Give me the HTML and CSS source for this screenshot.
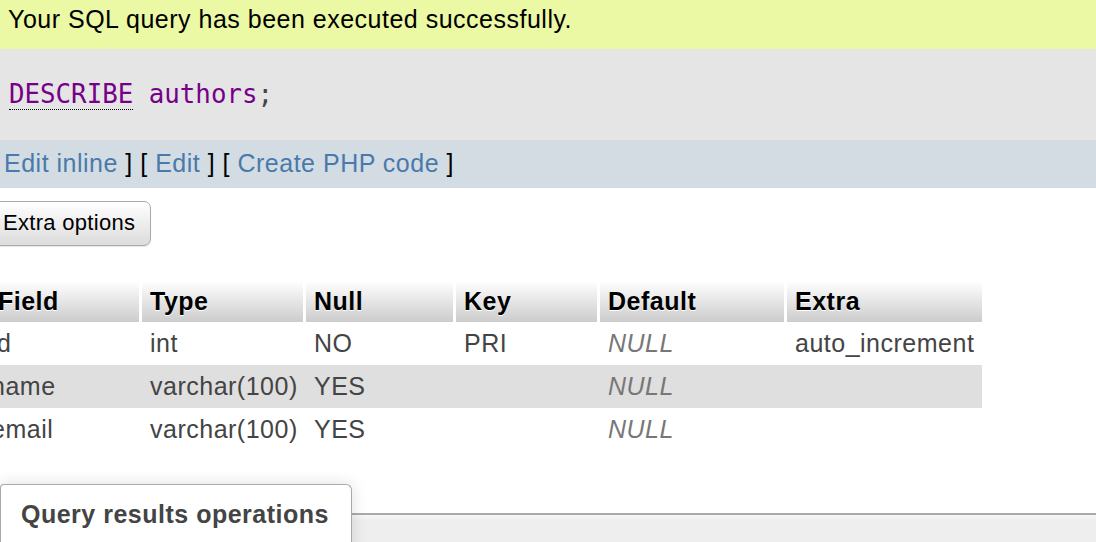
FILE: index.html
```html
<!DOCTYPE html>
<html>
<head>
<meta charset="utf-8">
<link rel="stylesheet" href="styles.css">
</head>
<body>
<div class="success">Your SQL query has been executed successfully.</div>
<div class="sql-box"><code class="sql"><span class="kw">DESCRIBE</span> <span class="var">authors</span><span class="punct">;</span></code></div>
<div class="tools"><a href="#">Edit inline</a> ] [ <a href="#">Edit</a> ] [ <a href="#">Create PHP code</a> ]</div>
<div class="btn-row"><button class="btn" type="button">Extra options</button></div>
<table class="grid">
  <colgroup>
    <col class="c-field"><col class="c-type"><col class="c-null"><col class="c-key"><col class="c-default"><col class="c-extra">
  </colgroup>
  <thead>
    <tr><th class="first">Field</th><th>Type</th><th>Null</th><th>Key</th><th>Default</th><th>Extra</th></tr>
  </thead>
  <tbody>
    <tr class="odd"><td>id</td><td>int</td><td>NO</td><td>PRI</td><td><i class="null">NULL</i></td><td>auto_increment</td></tr>
    <tr class="even"><td>name</td><td>varchar(100)</td><td>YES</td><td></td><td><i class="null">NULL</i></td><td></td></tr>
    <tr class="odd"><td>email</td><td>varchar(100)</td><td>YES</td><td></td><td><i class="null">NULL</i></td><td></td></tr>
  </tbody>
</table>
<div class="ops">
  <div class="tab">Query results operations</div>
  <div class="ops-body"></div>
</div>
</body>
</html>
```
FILE: styles.css
```css
html, body {
  margin: 0;
  padding: 0;
  background: #fff;
  overflow: hidden;
}
body {
  font-family: "Liberation Sans", Arial, sans-serif;
  font-size: 25px;
  line-height: 29px;
  letter-spacing: 0.5px;
  color: #000;
  width: 1096px;
  height: 542px;
}
.success {
  background: #ebf8a4;
  padding: 5px 8px 15px;
  height: 29px;
}
.sql-box {
  background: #e5e5e5;
  height: 91px;
  padding: 0 9px;
  box-sizing: border-box;
  padding-top: 30px;
}
.sql {
  font-family: "DejaVu Sans Mono", monospace;
  font-size: 25.8px;
  line-height: 30px;
  letter-spacing: 0;
  color: #770088;
}
.kw {
  border-bottom: 1px dotted #000;
}
.punct {
  color: #444;
}
.tools {
  background: #d3dce3;
  padding: 9px 4px 10px;
  height: 29px;
}
.tools a {
  color: #4a7aab;
  text-decoration: none;
}
.btn-row {
  padding-top: 13px;
}
.btn {
  font-family: "Liberation Sans", Arial, sans-serif;
  font-size: 22px;
  line-height: 27px;
  letter-spacing: 0.3px;
  color: #000;
  margin: 0 0 0 -11px;
  padding: 7px 15px 9px 13px;
  border: 1px solid #aaa;
  border-radius: 7px;
  background: linear-gradient(#ffffff, #dcdcdc);
  box-shadow: 0 1px 1px rgba(0,0,0,0.1);
}
.grid {
  margin: 35px 0 0 -20px;
  border-collapse: separate;
  border-spacing: 0;
  table-layout: fixed;
  width: 1002px;
}
.c-field { width: 159px; }
.c-type { width: 164px; }
.c-null { width: 150px; }
.c-key { width: 144px; }
.c-default { width: 187px; }
.c-extra { width: 198px; }
.grid th {
  text-align: left;
  font-weight: bold;
  padding: 6px 8px 6px 8px;
  border-left: 3px solid #fff;
  background: linear-gradient(#ffffff, #cccccc);
  text-shadow: 0 1px 0 #fff;
  white-space: nowrap;
}
.grid th.first {
  padding-left: 15px;
}
.grid td {
  padding: 7px 8px 7px 8px;
  border-left: 3px solid transparent;
  color: #444;
  white-space: nowrap;
  height: 29px;
}
.grid tr.even td {
  background: #dfdfdf;
}
.null {
  color: #777;
}
.ops {
  margin-top: 33px;
  display: flex;
  align-items: stretch;
  height: 80px;
}
.tab {
  width: 330px;
  padding: 15px 0 0 20px;
  font-weight: bold;
  color: #444;
  font-size: 25px;
  line-height: 29px;
  background: #fff;
  border: 1.5px solid #aaa;
  border-bottom: none;
  border-radius: 4px 6px 0 0;
  box-shadow: 0 0 16px rgba(0,0,0,0.13);
  position: relative;
  z-index: 1;
}
.ops-body {
  flex: 1;
  margin-top: 29px;
  border-top: 2px solid #aaa;
  background: linear-gradient(#f7f7f7, #eeeeee 6px);
}
```
